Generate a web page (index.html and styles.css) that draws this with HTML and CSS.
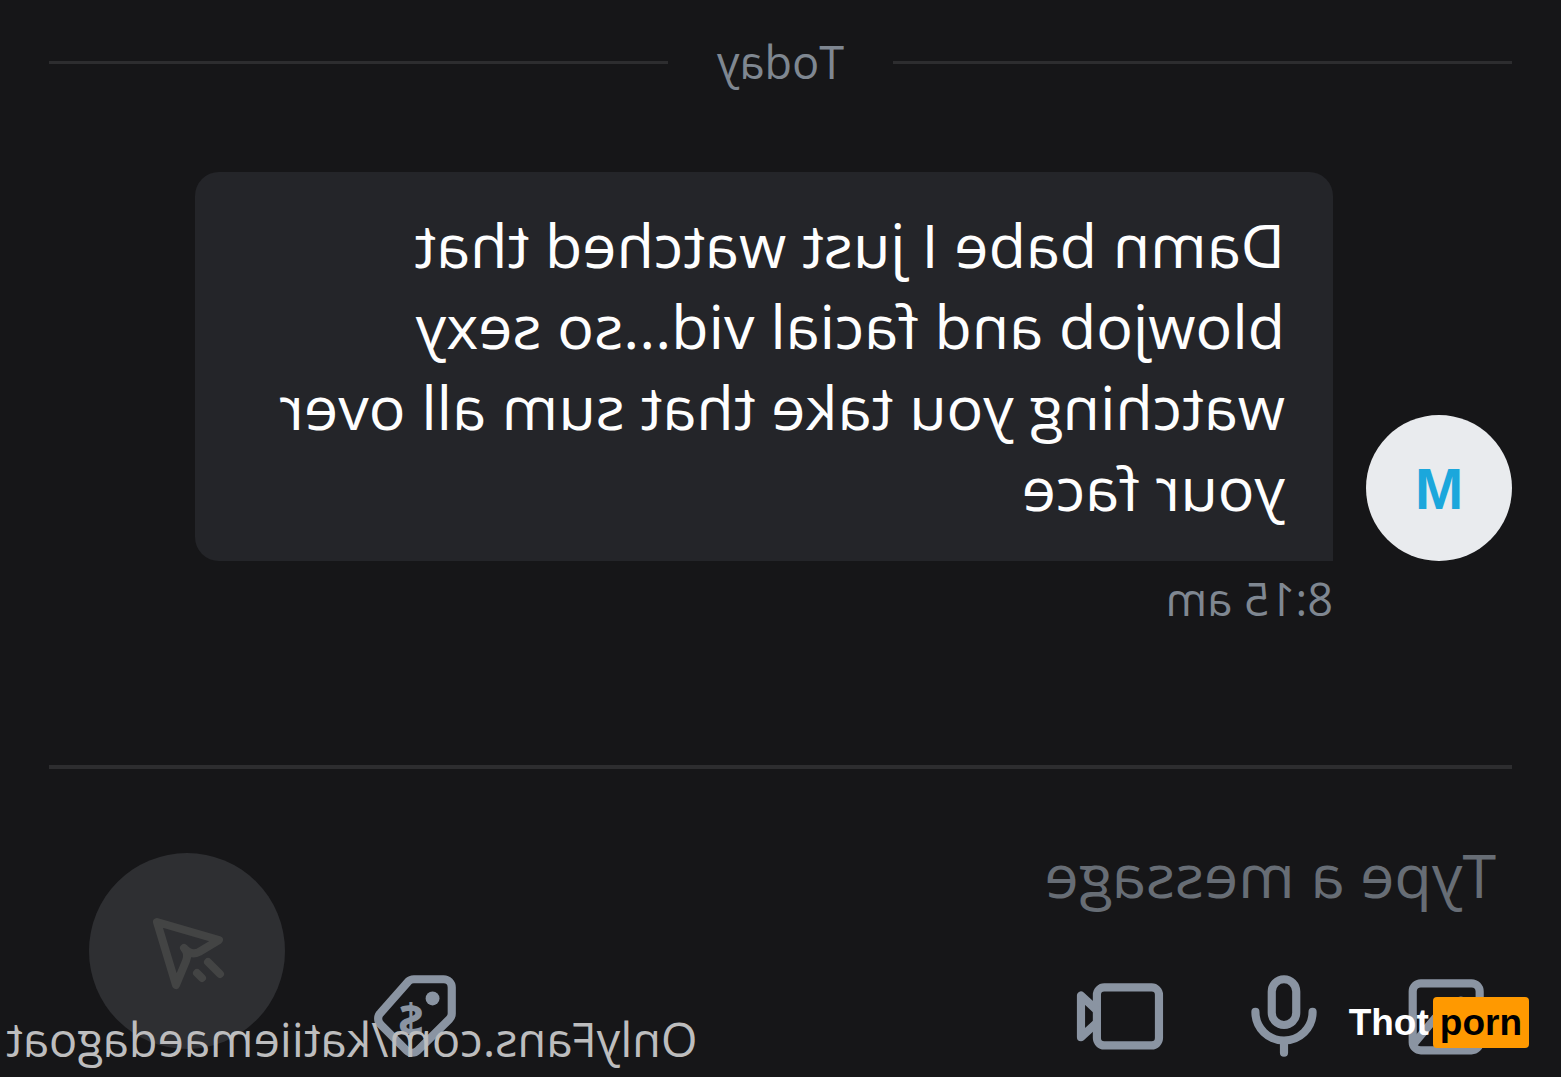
FILE: index.html
```html
<!DOCTYPE html>
<html lang="en">
<head>
<meta charset="utf-8">
<meta name="viewport" content="width=device-width, initial-scale=1">
<title>Messages</title>
<link rel="stylesheet" href="styles.css">
</head>
<body>
<main class="chat">
  <div class="day"><span>Today</span></div>
  <section class="message">
    <div class="avatar"><span>M</span></div>
    <div class="body">
      <p class="bubble">Damn babe I just watched that blowjob and facial vid...so sexy watching you take that sum all over your face</p>
      <time class="time">8:15 am</time>
    </div>
  </section>
  <form class="composer">
    <div class="entry">
      <input class="field" type="text" placeholder="Type a message" aria-label="Type a message">
      <div class="tools">
        <button class="tool" type="button" aria-label="Add image">
          <svg viewBox="0 0 24 24"><rect x="4" y="4" width="16.4" height="16.4" rx="2"/><path d="M4.500 18.500l3.500-3.500 2.500 2 4.300-4.600 5 6"/><circle class="solid" cx="8.600" cy="8.800" r="1.600"/></svg>
        </button>
        <button class="tool" type="button" aria-label="Record audio">
          <svg viewBox="0 0 24 24"><rect x="9" y="3" width="6" height="11.2" rx="3"/><path d="M5 11c0 4 3.200 7 7 7s7-3 7-7M12 18v3"/></svg>
        </button>
        <button class="tool" type="button" aria-label="Record video">
          <svg viewBox="0 0 24 24"><rect x="2.7" y="5" width="15.2" height="14.2" rx="1.8"/><path d="M18 10.500l3.800-3.500v10.200L18 13.700"/></svg>
        </button>
        <button class="tool price" type="button" aria-label="Set price">
          <svg viewBox="0 0 24 24"><path d="M12.200 3H5a2 2 0 0 0-2 2v6.300a2 2 0 0 0 .6 1.500l7.700 7.600a2 2 0 0 0 2.800 0l6.300-6.300a2 2 0 0 0 0-2.900L13.700 3.600a2 2 0 0 0-1.500-.6z"/><circle class="solid" cx="7.700" cy="7.700" r="1.700"/><text x="13" y="17" text-anchor="middle">$</text></svg>
        </button>
      </div>
    </div>
    <button class="send" type="submit" aria-label="Send">
      <svg viewBox="0 0 196 196"><path d="M128 69L66 87L86 99Q94 103 101 95Q96 101 99 108L109 132ZM77 109L65 121M88 120L83 125"/></svg>
    </button>
  </form>
  <div class="handle">OnlyFans.com/katiiemaedagoat</div>
</main>
<div class="brand"><span>Thot</span><span class="tag">porn</span></div>
</body>
</html>
```
FILE: styles.css
```css
* { box-sizing: border-box; }

body {
  margin: 0;
  min-height: 100vh;
  position: relative;
  overflow: hidden;
  background: #161618;
  color: #fefefe;
  font-family: "Open Sans", sans-serif;
}

/* The conversation is shown as in a mirror. */
.chat {
  position: relative;
  min-height: 100vh;
  padding: 32px 49px 0;
  transform: scaleX(-1);
}

.day {
  display: flex;
  align-items: center;
  gap: 49px;
  color: #7f8791;
  font-size: 45px;
  line-height: 60px;
}

.day::before,
.day::after {
  content: "";
  flex: 1;
  height: 3px;
  background: #2d2d2f;
}

.message {
  display: flex;
  align-items: flex-start;
  gap: 33px;
  padding: 80px 146px 0 0;
}

.avatar {
  display: flex;
  flex: none;
  align-items: center;
  justify-content: center;
  width: 146px;
  height: 146px;
  margin-top: 243px;
  border-radius: 50%;
  background: #e9ebee;
  color: #1ba7dc;
  font-family: "Liberation Sans", sans-serif;
  font-size: 58px;
  font-weight: 700;
}

.body { flex: 1; }

.bubble {
  margin: 0;
  padding: 32px 48px 33px;
  border-radius: 24px 24px 24px 0;
  background: #242529;
  font-size: 61px;
  line-height: 81px;
}

.time {
  display: block;
  margin-top: 8px;
  color: #7f8791;
  font-size: 45px;
  line-height: 60px;
}

.composer {
  display: flex;
  align-items: flex-start;
  justify-content: space-between;
  margin-top: 136px;
  padding: 84px 40px 0 16px;
  border-top: 4px solid #2d2d2f;
}

.entry {
  flex: 1;
  min-width: 0;
}

.field {
  display: block;
  width: 100%;
  height: 82px;
  margin-top: -20px;
  padding: 0;
  border: 0;
  background: none;
  color: #fefefe;
  font: 61px "Open Sans", sans-serif;
}

.field::placeholder {
  color: #676d75;
  opacity: 1;
}

.tools {
  display: flex;
  gap: 65px;
  padding-top: 52px;
}

.tool,
.send {
  flex: none;
  padding: 0;
  border: 0;
  background: none;
}

.tool {
  width: 98px;
  height: 98px;
  color: #8a94a2;
}

.price {
  margin-left: auto;
  margin-right: 81px;
}

svg {
  display: block;
  width: 100%;
  height: 100%;
  fill: none;
  stroke: currentColor;
  stroke-width: 2;
  stroke-linecap: round;
  stroke-linejoin: round;
}

.solid,
svg text {
  fill: currentColor;
  stroke: none;
}

svg text { font: bold 11px "Open Sans", sans-serif; }

.send {
  width: 196px;
  height: 196px;
  border-radius: 50%;
  background: #2e2f32;
  color: #434444;
}

.send svg { stroke-width: 8; }

.handle {
  position: absolute;
  right: 6px;
  bottom: 8px;
  color: #bdbdbe;
  font-size: 47px;
  line-height: 60px;
}

.brand {
  position: absolute;
  right: 32px;
  bottom: 29px;
  display: flex;
  gap: 4px;
  color: #ffffff;
  font-family: "Liberation Sans", sans-serif;
  font-size: 37px;
  font-weight: 700;
  line-height: 51px;
}

.tag {
  padding: 0 7px;
  border-radius: 4px;
  background: #ff9900;
  color: #000000;
}
```
